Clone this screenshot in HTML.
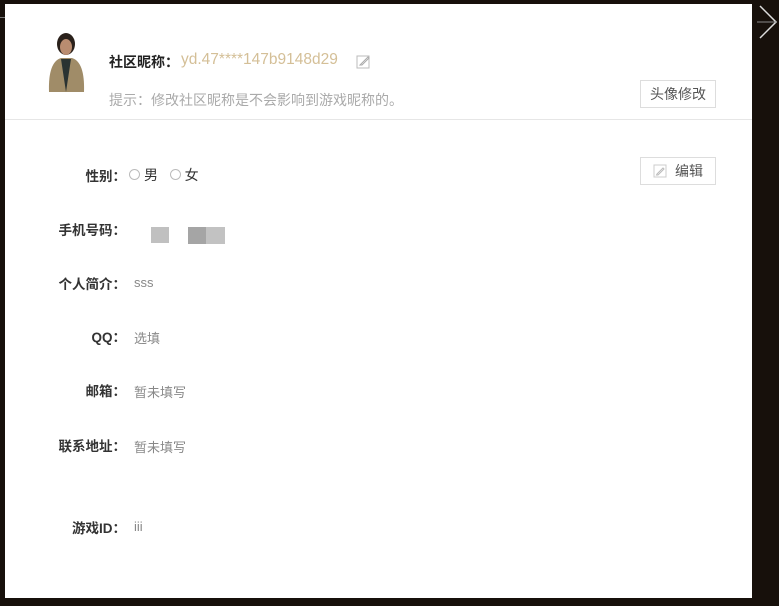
<!DOCTYPE html>
<html><head><meta charset="utf-8"><style>
body{margin:0;width:779px;height:606px;background:#17100b;position:relative;overflow:hidden;font-family:"Liberation Sans","Noto Sans CJK SC",sans-serif;}
.panel{position:absolute;left:5px;top:4px;width:747px;height:594px;background:#fff;}
.a{position:absolute;white-space:nowrap;}
.lbl{position:absolute;width:118px;text-align:right;font-size:13.5px;font-weight:bold;color:#333;left:3px;}
.val{position:absolute;left:129px;font-size:13px;color:#888;}
.btn{position:absolute;border:1px solid #ddd;font-size:14px;color:#555;text-align:center;line-height:26px;height:26px;box-sizing:content-box;}
.rad{display:inline-block;width:9px;height:9px;border:1px solid #bbb;border-radius:50%;vertical-align:0px;margin-right:4px;}
</style></head><body>
<div class="a" style="left:0;top:17px;width:6px;height:1px;background:#777"></div>
<svg class="a" style="left:757px;top:2px" width="22" height="40"><path d="M3 4 L19 20 L3 36" stroke="#ddd" stroke-width="1.5" fill="none"/><path d="M0 20 H19" stroke="#888" stroke-width="1"/></svg>
<div class="a" style="left:488px;top:0;width:40px;height:4px;border-bottom:1px solid #555"></div>
<div class="panel">
 <svg class="a" style="left:40px;top:28px" width="44" height="60">
  <ellipse cx="21" cy="12" rx="9" ry="11" fill="#2a211b"/>
  <ellipse cx="21" cy="15" rx="6" ry="8" fill="#b98c70"/>
  <path d="M4 60 Q3 30 16 26 L27 26 Q40 30 39 60 Z" fill="#a08c68"/>
  <path d="M16 27 L21 60 L26 27 Z" fill="#2a3332"/>
 </svg>
 <div class="a" style="left:104px;top:48px;font-size:14px;font-weight:bold;color:#222">社区昵称：</div>
 <div class="a" style="left:176px;top:47px;font-size:15.5px;color:#d4bf97">yd.47****147b9148d29</div>
 <svg class="a" style="left:351px;top:50px" width="15" height="15"><rect x="1" y="2" width="12" height="12" fill="none" stroke="#bbb"/><path d="M5 10 L12 3 L13 4 L6 11 L4 11 Z" fill="#fff" stroke="#aaa"/></svg>
 <div class="a" style="left:104px;top:86px;font-size:14px;color:#aaa">提示：修改社区昵称是不会影响到游戏昵称的。</div>
 <div class="btn" style="left:635px;top:76px;width:74px">头像修改</div>
 <div class="a" style="left:0;top:115px;width:747px;height:1px;background:#e6e6e6"></div>
 <div class="btn" style="left:635px;top:153px;width:74px"><svg width="14" height="14" style="vertical-align:-2px;margin-right:8px"><rect x="1" y="1" width="12" height="12" fill="none" stroke="#ccc"/><path d="M4 10 L10 4 L11 5 L5 11 L3.5 11 Z" fill="none" stroke="#bbb"/></svg>编辑</div>

 <div class="lbl" style="top:161px">性别：</div>
 <div class="a" style="left:124px;top:161px;font-size:14px;color:#333"><span class="rad"></span>男 &nbsp; <span class="rad"></span>女</div>
 <div class="lbl" style="top:215px">手机号码：</div>
 <div class="a" style="left:146px;top:223px;width:18px;height:16px;background:#c0c0c0"></div>
 <div class="a" style="left:183px;top:223px;width:18px;height:17px;background:#a5a5a5"></div>
 <div class="a" style="left:201px;top:223px;width:19px;height:17px;background:#c2c2c2"></div>
 <div class="lbl" style="top:269px">个人简介：</div>
 <div class="val" style="top:271px">sss</div>
 <div class="lbl" style="top:322px">QQ：</div>
 <div class="val" style="top:324px">选填</div>
 <div class="lbl" style="top:376px">邮箱：</div>
 <div class="val" style="top:378px">暂未填写</div>
 <div class="lbl" style="top:431px">联系地址：</div>
 <div class="val" style="top:433px">暂未填写</div>
 <div class="lbl" style="top:513px">游戏ID：</div>
 <div class="val" style="top:515px">iii</div>
</div>
</body></html>
